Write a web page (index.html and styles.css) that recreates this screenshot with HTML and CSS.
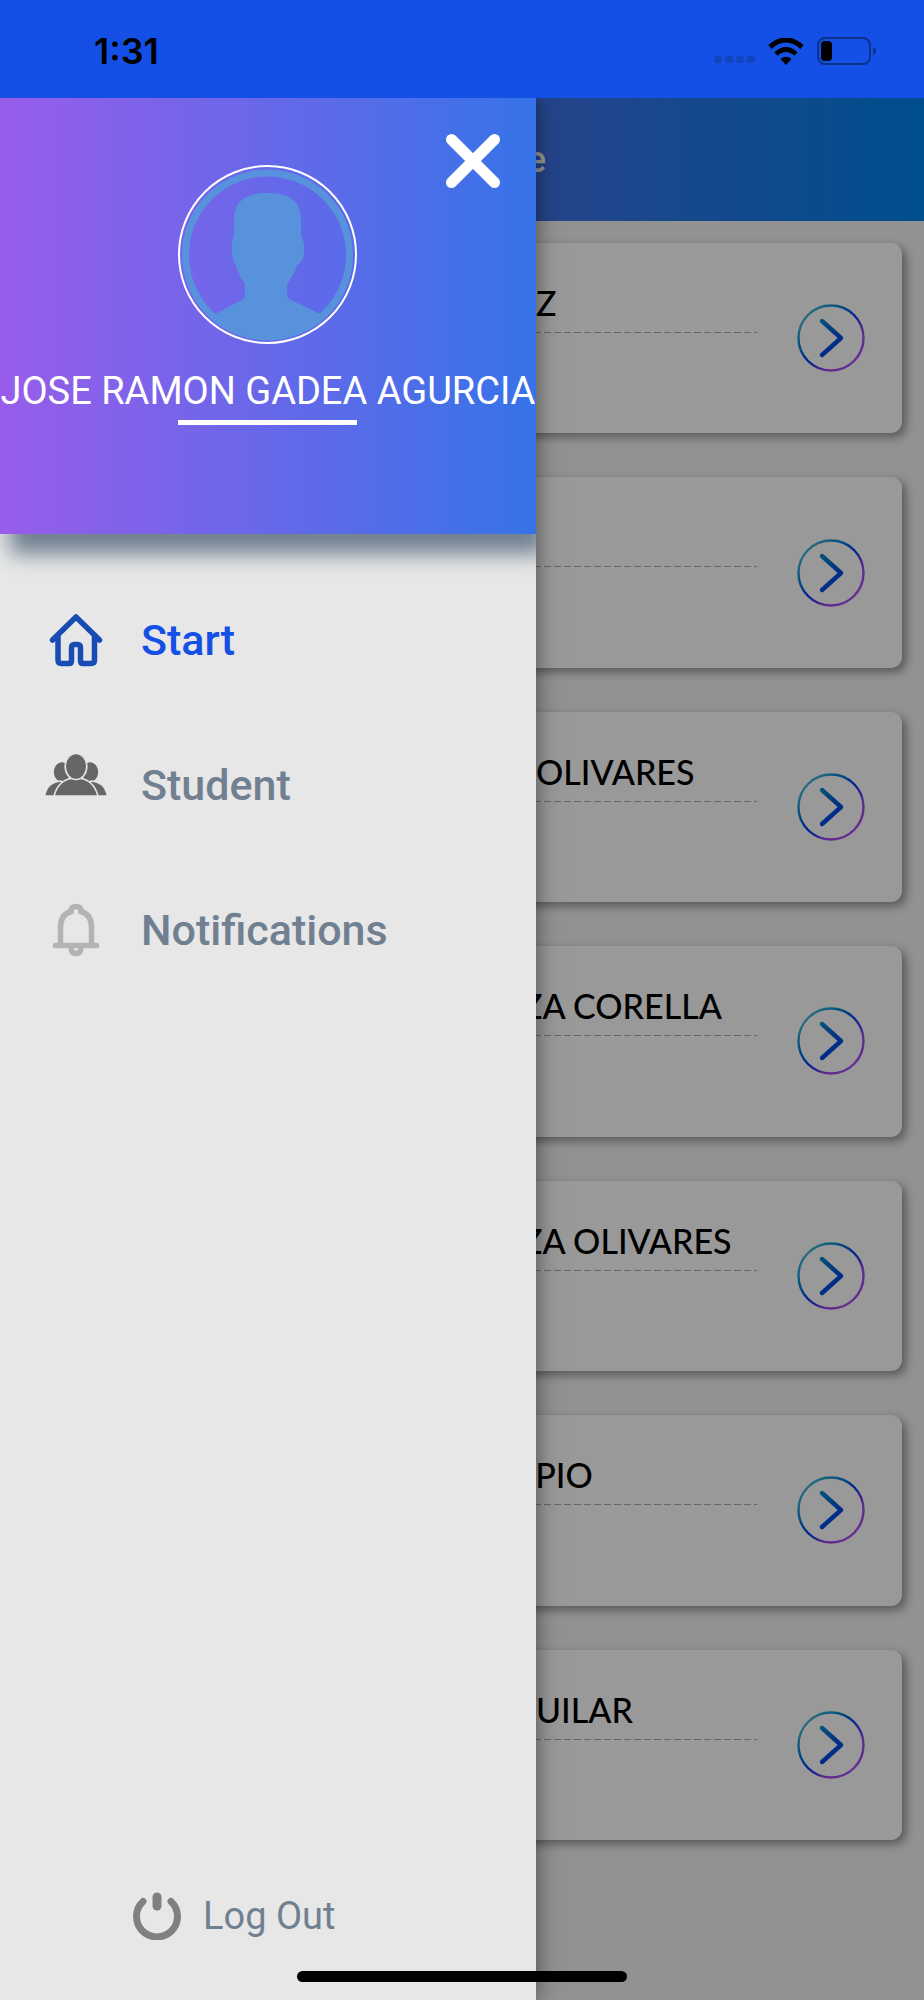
FILE: index.html
```html
<!DOCTYPE html>
<html lang="en">
<head>
<meta charset="utf-8">
<meta name="viewport" content="width=device-width, initial-scale=1">
<title>Start</title>
<link rel="stylesheet" href="styles.css">
</head>
<body>
<svg class="defs" aria-hidden="true">
  <defs>
    <linearGradient id="ring" x1="0" y1="0" x2="1" y2="1">
      <stop offset="0.12" stop-color="#48b8d8"/>
      <stop offset="0.32" stop-color="#0a88d0"/>
      <stop offset="0.5" stop-color="#0040f0"/>
      <stop offset="0.6" stop-color="#3a38e8"/>
      <stop offset="0.7" stop-color="#a048e8"/>
      <stop offset="1" stop-color="#b050ff"/>
    </linearGradient>
    <linearGradient id="arrow" gradientUnits="userSpaceOnUse" x1="20" y1="14" x2="44" y2="38">
      <stop offset="0" stop-color="#0a98c8"/>
      <stop offset="0.6" stop-color="#0060d0"/>
      <stop offset="1" stop-color="#0044e8"/>
    </linearGradient>
    <symbol id="next" viewBox="0 0 68 68">
      <circle cx="34" cy="34" r="32.500" fill="none" stroke="url(#ring)" stroke-width="2.400"/>
      <path d="M25 17 44 34 25 51" fill="none" stroke="url(#arrow)" stroke-width="4.400" stroke-linecap="round" stroke-linejoin="round"/>
    </symbol>
  </defs>
</svg>
<div class="app">
  <header class="status">
    <span class="time">1:31</span>
    <div class="indicators">
      <span class="dots"><i></i><i></i><i></i><i></i></span>
      <svg class="wifi" viewBox="0 0 36 27" aria-hidden="true">
        <path d="M2 9Q18-5 34 9" fill="none" stroke="#000" stroke-width="5"/>
        <path d="M8 16Q18 7 28 16" fill="none" stroke="#000" stroke-width="5"/>
        <path d="M12.500 21Q18 16.500 23.500 21L18 27Z"/>
      </svg>
      <svg class="battery" viewBox="0 0 60 28" aria-hidden="true">
        <rect x="1" y="1" width="52" height="26" rx="7" fill="none" stroke="#0d328d" stroke-width="2"/>
        <rect x="4" y="4" width="11" height="20" rx="4"/>
        <path d="M56 10Q59 11 59 14T56 18Z" fill="#0d328d"/>
      </svg>
    </div>
  </header>

  <div class="screen">
    <main class="page">
      <div class="topbar"><h1 class="title">e</h1></div>
      <ul class="cards">
        <li class="card"><div class="body"><p class="name">Z</p></div><button class="next" aria-label="Open"><svg><use href="#next"/></svg></button></li>
        <li class="card"><div class="body"><p class="name"></p></div><button class="next" aria-label="Open"><svg><use href="#next"/></svg></button></li>
        <li class="card"><div class="body"><p class="name">OLIVARES</p></div><button class="next" aria-label="Open"><svg><use href="#next"/></svg></button></li>
        <li class="card"><div class="body"><p class="name tucked">ZA CORELLA</p></div><button class="next" aria-label="Open"><svg><use href="#next"/></svg></button></li>
        <li class="card"><div class="body"><p class="name tucked">ZA OLIVARES</p></div><button class="next" aria-label="Open"><svg><use href="#next"/></svg></button></li>
        <li class="card"><div class="body"><p class="name tucked-deep">APIO</p></div><button class="next" aria-label="Open"><svg><use href="#next"/></svg></button></li>
        <li class="card"><div class="body"><p class="name">UILAR</p></div><button class="next" aria-label="Open"><svg><use href="#next"/></svg></button></li>
      </ul>
    </main>
    <div class="scrim"></div>

    <aside class="drawer">
      <div class="profile">
        <button class="close" aria-label="Close menu">
          <svg viewBox="0 0 54 54"><path d="M5.500 5.500 48.500 48.500M48.500 5.500 5.500 48.500" fill="none" stroke="#fff" stroke-width="11" stroke-linecap="round"/></svg>
        </button>
        <svg class="avatar" viewBox="0 0 179 179" aria-hidden="true">
          <circle cx="89.500" cy="89.500" r="88.500" fill="none" stroke="#fff" stroke-width="2"/>
          <circle cx="89.500" cy="90" r="82" fill="none" stroke="#5992dc" stroke-width="7"/>
          <path fill="#5992dc" d="M56 55C56 36 68 28 89.500 28S123 36 123 55V71Q126 75 126 80V88Q126 96 119 100Q116 110 109 119V130Q109 133 113 135L142 149Q120 174 89.500 174T37 149L64 135Q67 133 67 130V119Q60 110 57.500 99Q54 96 54 88V79Q54 74 56 71Z"/>
        </svg>
        <h2 class="user">JOSE RAMON GADEA AGURCIA</h2>
        <div class="rule"></div>
      </div>
      <nav class="menu">
        <a class="item active" href="#">
          <svg class="icon" viewBox="0 0 62 62" aria-hidden="true">
            <path d="M7.500 31 31 8 54.500 31M13 26V51Q13 54.500 16.500 54.500H24Q26.500 54.500 26.500 52V39Q26.500 35.500 29.500 35.500H32.500Q35.500 35.500 35.500 39V52Q35.500 54.500 38 54.500H46Q49.500 54.500 49.500 51V26" fill="none" stroke="#184cb4" stroke-width="5.500" stroke-linecap="round" stroke-linejoin="round"/>
          </svg>
          <span>Start</span>
        </a>
        <a class="item" href="#">
          <svg class="icon" viewBox="0 0 62 62" aria-hidden="true">
            <g fill="#666" stroke="#e7e7e7" stroke-width="1.600">
              <ellipse cx="17" cy="18" rx="9" ry="10.500"/>
              <ellipse cx="45" cy="18" rx="9" ry="10.500"/>
              <path d="M-.5 42Q2 28 16 27L31 42ZM62.500 42Q60 28 46 27L31 42Z"/>
              <path d="M9 42Q14 24 31 24T53 42Z"/>
              <ellipse cx="31" cy="12.500" rx="10.800" ry="13"/>
            </g>
          </svg>
          <span>Student</span>
        </a>
        <a class="item" href="#">
          <svg class="icon" viewBox="0 0 62 62" aria-hidden="true">
            <path d="M10.500 46.500H51.500M15.500 46.500V28C15.500 20 19.500 14.500 26 12.500C26 9 28 7.500 31 7.500S36 9 36 12.500C42.500 14.500 46.500 20 46.500 28V46.500M26 48.500Q26 54.500 31 54.500T36 48.500" fill="none" stroke="#b3b3b3" stroke-width="5.500" stroke-linecap="round"/>
          </svg>
          <span>Notifications</span>
        </a>
      </nav>
      <a class="logout" href="#">
        <svg viewBox="0 0 48 48" aria-hidden="true">
          <path d="M10 9.500A20.500 20.500 0 1 0 38 9.500" fill="none" stroke="#808080" stroke-width="7" stroke-linecap="round"/>
          <path d="M24 5V14" fill="none" stroke="#808080" stroke-width="9" stroke-linecap="round"/>
        </svg>
        <span>Log Out</span>
      </a>
    </aside>
    <div class="home-bar"></div>
  </div>
</div>
</body>
</html>
```
FILE: styles.css
```css
* {
  box-sizing: border-box;
}

body {
  margin: 0;
  font-family: Roboto, "Liberation Sans", sans-serif;
}

button {
  padding: 0;
  border: 0;
  background: none;
  cursor: pointer;
}

a {
  color: inherit;
  text-decoration: none;
}

.defs {
  position: absolute;
  width: 0;
  height: 0;
}

.app {
  display: flex;
  flex-direction: column;
  min-height: 100vh;
}

.status {
  display: flex;
  justify-content: space-between;
  align-items: center;
  height: 98px;
  padding: 4px 47px 0 94px;
  background: #1450e6;
}

.time {
  font-family: Inter, sans-serif;
  font-size: 36px;
  font-weight: 600;
}

.indicators {
  display: flex;
  align-items: center;
  gap: 13px;
}

.dots {
  display: flex;
  gap: 3px;
  padding-top: 16px;
}

.dots i {
  width: 8px;
  height: 7px;
  border-radius: 2px;
  background: #1145bd;
}

.wifi {
  width: 36px;
  height: 27px;
}

.battery {
  width: 60px;
  height: 28px;
}

.screen {
  position: relative;
  display: flex;
  flex: 1;
  overflow: hidden;
}

.page {
  display: flex;
  flex: 1;
  flex-direction: column;
  background: #f3f3f3;
}

.topbar {
  display: flex;
  align-items: center;
  height: 123px;
  padding-left: 57%;
  background: linear-gradient(90deg, #985dea, #0082e9);
}

.title {
  margin: 0;
  color: #fff;
  font-size: 36px;
  font-weight: 500;
}

.cards {
  display: grid;
  flex: 1;
  grid-auto-rows: 1fr;
  gap: 44px;
  margin: 0;
  padding: 22px 22px 160px;
  list-style: none;
}

.card {
  display: flex;
  align-items: center;
  gap: 40px;
  padding: 0 37px 0 22px;
  border-radius: 11px;
  background: #fff;
  box-shadow: 4px 4px 10px rgba(0, 0, 0, 0.4);
}

.body {
  flex: 1;
  align-self: flex-start;
  padding-top: 40px;
}

.name {
  height: 50px;
  margin: 0;
  padding-left: 492px;
  background: repeating-linear-gradient(90deg, #a3adb6 0 7px, transparent 7px 10px) bottom / 100% 1px no-repeat;
  font-family: Lato, sans-serif;
  font-size: 34px;
  font-weight: 500;
  line-height: 40px;
  white-space: nowrap;
}

.tucked {
  padding-left: 478px;
}

.tucked-deep {
  padding-left: 468px;
}

.next svg {
  display: block;
  width: 68px;
  height: 68px;
}

.scrim {
  position: absolute;
  inset: 0;
  background: rgba(0, 0, 0, 0.4);
}

.drawer {
  position: absolute;
  inset: 0 42% 0 0;
  display: flex;
  flex-direction: column;
  background: #e7e7e7;
  box-shadow: 0 0 22px rgba(0, 0, 0, 0.5);
  color: #708090;
}

.profile {
  position: relative;
  display: flex;
  flex-direction: column;
  align-items: center;
  height: 436px;
  padding-top: 67px;
  background: linear-gradient(90deg, #985dea, #3673e8);
  box-shadow: 10px 20px 20px #708090;
  clip-path: inset(0 0 -60px 0);
}

.close {
  position: absolute;
  top: 36px;
  right: 36px;
}

.close svg {
  display: block;
  width: 54px;
  height: 54px;
}

.avatar {
  width: 179px;
  height: 179px;
}

.user {
  margin: 24px 0 6px;
  color: #fff;
  font-size: 38px;
  font-weight: 400;
  line-height: 46px;
  white-space: nowrap;
}

.rule {
  width: 179px;
  height: 5px;
  background: #fff;
}

.menu {
  display: flex;
  flex: 1;
  flex-direction: column;
  gap: 85px;
  padding: 76px 0 0 45px;
}

.item {
  display: flex;
  align-items: center;
  gap: 34px;
  height: 60px;
  font-size: 43px;
  font-weight: 500;
}

.active {
  color: #1450e6;
}

.icon {
  width: 62px;
  height: 62px;
}

.logout {
  display: flex;
  align-items: center;
  gap: 22px;
  margin-left: 133px;
  padding-bottom: 60px;
  font-size: 38px;
  font-weight: 400;
}

.logout svg {
  width: 48px;
  height: 48px;
}

.home-bar {
  position: absolute;
  bottom: 18px;
  left: 50%;
  width: 330px;
  height: 11px;
  border-radius: 6px;
  background: #000;
  transform: translateX(-50%);
}
```
